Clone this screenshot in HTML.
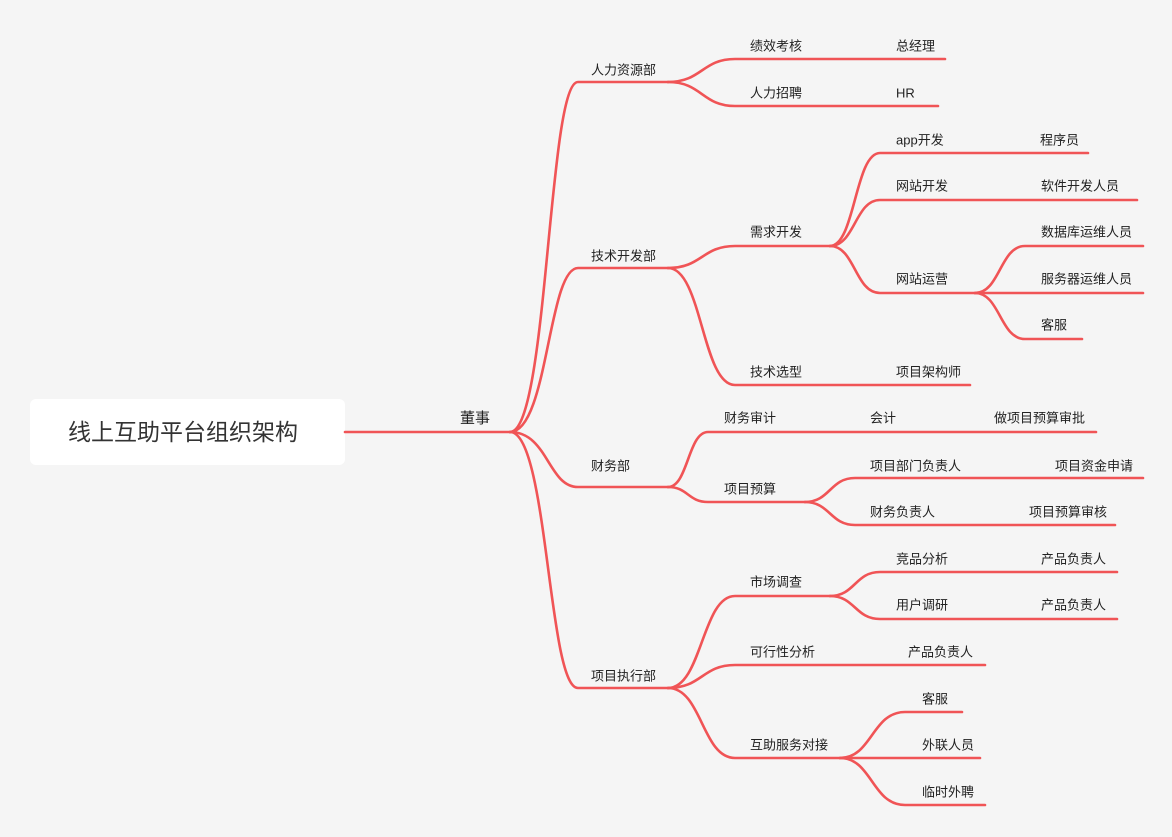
<!DOCTYPE html>
<html><head><meta charset="utf-8"><style>
html,body{margin:0;padding:0;background:#f5f5f5;width:1172px;height:837px;overflow:hidden}
svg{display:block}
text{font-family:"Liberation Sans","Noto Sans CJK SC",sans-serif;font-size:13px;fill:#222;dominant-baseline:middle;transform:translateY(2px)}
path{fill:none;stroke:#f05456;stroke-width:2.6;stroke-linecap:round}
</style></head><body>
<svg width="1172" height="837" viewBox="0 0 1172 837">
<rect x="30" y="399" width="315" height="66" rx="6" fill="#fff"/>
<text x="68" y="432" style="font-size:23px;fill:#333">线上互助平台组织架构</text>
<path d="M345 432 H510"/>
<text x="460" y="417" style="font-size:15px">董事</text>
<path d="M510 432 C548 432 548 82 578 82 H668"/>
<path d="M510 432 C548 432 548 268 578 268 H668"/>
<path d="M510 432 C548 432 548 487 578 487 H668"/>
<path d="M510 432 C548 432 548 688 578 688 H668"/>
<text x="591" y="69">人力资源部</text>
<text x="591" y="255">技术开发部</text>
<text x="591" y="465">财务部</text>
<text x="591" y="675">项目执行部</text>
<path d="M668 82 C702 82 702 59 735 59 H945"/>
<path d="M668 82 C702 82 702 106 735 106 H938"/>
<text x="750" y="45">绩效考核</text><text x="896" y="45">总经理</text>
<text x="750" y="92">人力招聘</text><text x="896" y="92">HR</text>
<path d="M668 268 C702 268 702 246 735 246 H830"/>
<path d="M668 268 C702 268 702 385 735 385 H970"/>
<text x="750" y="231">需求开发</text>
<text x="750" y="371">技术选型</text><text x="896" y="371">项目架构师</text>
<path d="M830 246 C855 246 855 153 880 153 H1088"/>
<path d="M830 246 C855 246 855 200 880 200 H1137"/>
<path d="M830 246 C855 246 855 293 880 293 H975"/>
<text x="896" y="139">app开发</text><text x="1040" y="139">程序员</text>
<text x="896" y="185">网站开发</text><text x="1041" y="185">软件开发人员</text>
<text x="896" y="278">网站运营</text>
<path d="M975 293 C1000 293 1000 246 1025 246 H1143"/>
<path d="M975 293 H1143"/>
<path d="M975 293 C1000 293 1000 339 1025 339 H1082"/>
<text x="1041" y="231">数据库运维人员</text>
<text x="1041" y="278">服务器运维人员</text>
<text x="1041" y="324">客服</text>
<path d="M668 487 C688 487 688 432 708 432 H1096"/>
<path d="M668 487 C688 487 688 502 708 502 H805"/>
<text x="724" y="417">财务审计</text><text x="870" y="417">会计</text><text x="994" y="417">做项目预算审批</text>
<text x="724" y="488">项目预算</text>
<path d="M805 502 C830 502 830 478 855 478 H1143"/>
<path d="M805 502 C830 502 830 525 855 525 H1115"/>
<text x="870" y="465">项目部门负责人</text><text x="1055" y="465">项目资金申请</text>
<text x="870" y="511">财务负责人</text><text x="1029" y="511">项目预算审核</text>
<path d="M668 688 C702 688 702 596 735 596 H830"/>
<path d="M668 688 C702 688 702 665 735 665 H985"/>
<path d="M668 688 C702 688 702 758 735 758 H840"/>
<text x="750" y="581">市场调查</text>
<text x="750" y="651">可行性分析</text><text x="908" y="651">产品负责人</text>
<text x="750" y="744">互助服务对接</text>
<path d="M830 596 C855 596 855 572 880 572 H1117"/>
<path d="M830 596 C855 596 855 619 880 619 H1117"/>
<text x="896" y="558">竞品分析</text><text x="1041" y="558">产品负责人</text>
<text x="896" y="604">用户调研</text><text x="1041" y="604">产品负责人</text>
<path d="M840 758 C872 758 872 712 905 712 H962"/>
<path d="M840 758 H980"/>
<path d="M840 758 C872 758 872 805 905 805 H985"/>
<text x="922" y="698">客服</text>
<text x="922" y="744">外联人员</text>
<text x="922" y="791">临时外聘</text>
</svg>
</body></html>
